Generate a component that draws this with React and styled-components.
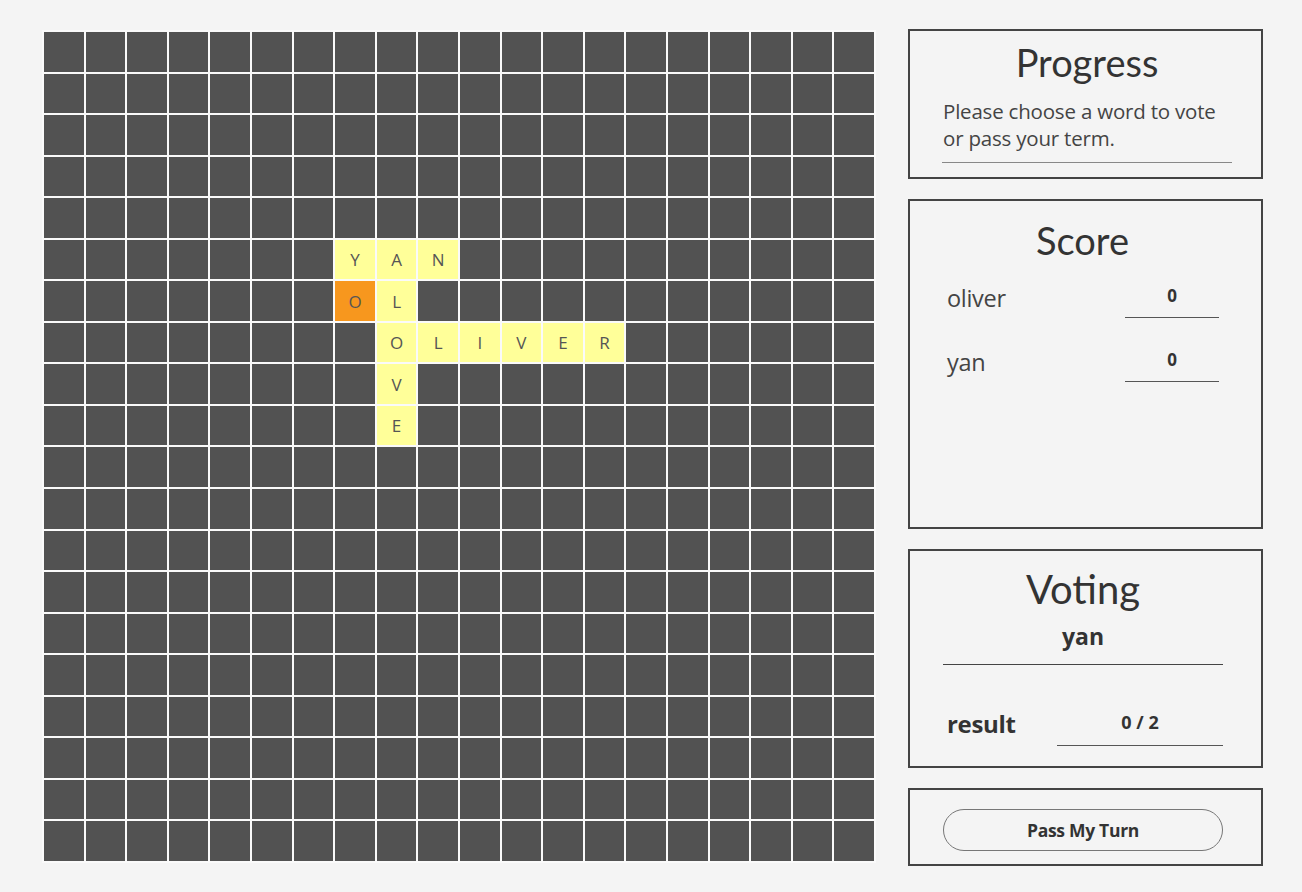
import React from "react";
import styled, { createGlobalStyle } from "styled-components";

const Global = createGlobalStyle`
  html, body { margin: 0; padding: 0; background: #f4f4f4; }
  body { font-family: "Open Sans", "Noto Sans", sans-serif; color: #333; }
`;

const Page = styled.div`
  display: flex;
  align-items: flex-start;
  gap: 32px;
  padding: 30px 0 0 42px;
  width: 1302px;
  height: 892px;
  box-sizing: border-box;
`;

const Board = styled.div`
  width: 834px;
  height: 833px;
  box-sizing: border-box;
  background: #fafafa;
  padding: 2px;
  display: grid;
  grid-template-columns: repeat(20, 1fr);
  grid-template-rows: repeat(20, 1fr);
  gap: 2px;
`;

const Cell = styled.div`
  background: ${(p) => (p.$kind === "hl" ? "#f7971e" : p.$kind === "word" ? "#ffff99" : "#525252")};
  display: flex;
  align-items: center;
  justify-content: center;
  font-family: "Open Sans", "Noto Sans", sans-serif;
  font-size: 17px;
  color: #555;
`;

const Side = styled.div`
  width: 355px;
  margin-top: -1px;
  display: flex;
  flex-direction: column;
  gap: 20px;
`;

const Panel = styled.section`
  border: 2px solid #444;
  box-sizing: border-box;
  height: ${(p) => p.$h}px;
  padding: ${(p) => p.$pad || "0 38px 0 33px"};
  display: flex;
  flex-direction: column;
`;

const Title = styled.h2`
  margin: 0;
  font-family: "Lato", "Noto Sans", sans-serif;
  font-weight: 400;
  font-size: ${(p) => p.$size || 38}px;
  line-height: 1;
  text-align: center;
  color: #333;
  padding-top: ${(p) => p.$top || 12}px;
`;

const Message = styled.p`
  margin: 17px 0 0;
  font-size: 20.5px;
  line-height: 27px;
  color: #444;
  padding: 0 8px 10px 1px;
  border-bottom: 1px solid #888;
  letter-spacing: -0.2px;
`;

const ScoreList = styled.div`
  display: flex;
  flex-direction: column;
  gap: 29px;
  margin-top: 24px;
  padding-left: 3px;
`;

const ScoreRow = styled.div`
  display: flex;
  align-items: flex-end;
  justify-content: space-between;
`;

const Name = styled.span`
  font-size: 23.5px;
  letter-spacing: -0.3px;
  color: #444;
  line-height: 30px;
  padding-bottom: 5px;
`;

const Value = styled.span`
  width: 94px;
  text-align: center;
  font-weight: 700;
  font-size: 17px;
  color: #333;
  line-height: 24px;
  padding-bottom: 9px;
  border-bottom: 1px solid #555;
  margin-right: 2px;
`;

const VoteWord = styled.div`
  margin-top: 12px;
  text-align: center;
  font-weight: 700;
  font-size: 23px;
  line-height: 30px;
  color: #333;
  padding-bottom: 13px;
  border-bottom: 1px solid #444;
`;

const ResultRow = styled.div`
  margin-top: 44px;
  display: flex;
  align-items: flex-end;
  justify-content: space-between;
  padding-left: 4px;
`;

const ResultLabel = styled.span`
  font-weight: 700;
  font-size: 24px;
  letter-spacing: -0.3px;
  color: #333;
  line-height: 30px;
  padding-bottom: 7px;
`;

const ResultValue = styled.span`
  width: 166px;
  text-align: center;
  font-weight: 700;
  font-size: 18px;
  color: #333;
  line-height: 24px;
  padding-bottom: 11px;
  border-bottom: 1px solid #555;
`;

const PassButton = styled.button`
  margin-top: 19px;
  height: 42px;
  width: 100%;
  border: 1px solid #777;
  border-radius: 21px;
  background: transparent;
  font-family: "Open Sans", "Noto Sans", sans-serif;
  font-weight: 700;
  font-size: 17.5px;
  letter-spacing: -0.3px;
  color: #333;
  cursor: pointer;
`;

const letters = {
  "5-7": "Y",
  "5-8": "A",
  "5-9": "N",
  "6-7": "O",
  "6-8": "L",
  "7-8": "O",
  "7-9": "L",
  "7-10": "I",
  "7-11": "V",
  "7-12": "E",
  "7-13": "R",
  "8-8": "V",
  "9-8": "E",
};

export default function App() {
  const cells = [];
  for (let r = 0; r < 20; r++) {
    for (let c = 0; c < 20; c++) {
      const key = `${r}-${c}`;
      const ch = letters[key];
      const kind = key === "6-7" ? "hl" : ch ? "word" : "empty";
      cells.push(
        <Cell key={key} $kind={kind}>
          {ch || ""}
        </Cell>
      );
    }
  }
  return (
    <>
      <Global />
      <Page>
        <Board>{cells}</Board>
        <Side>
          <Panel $h={150} $pad="0 29px 0 32px">
            <Title $size={38} $top={12}>Progress</Title>
            <Message>Please choose a word to vote or pass your term.</Message>
          </Panel>
          <Panel $h={330} $pad="0 40px 0 34px">
            <Title $size={38} $top={20}>Score</Title>
            <ScoreList>
              <ScoreRow>
                <Name>oliver</Name>
                <Value>0</Value>
              </ScoreRow>
              <ScoreRow>
                <Name>yan</Name>
                <Value>0</Value>
              </ScoreRow>
            </ScoreList>
          </Panel>
          <Panel $h={219}>
            <Title $size={40} $top={18}>Voting</Title>
            <VoteWord>yan</VoteWord>
            <ResultRow>
              <ResultLabel>result</ResultLabel>
              <ResultValue>0 / 2</ResultValue>
            </ResultRow>
          </Panel>
          <Panel $h={78}>
            <PassButton>Pass My Turn</PassButton>
          </Panel>
        </Side>
      </Page>
    </>
  );
}
